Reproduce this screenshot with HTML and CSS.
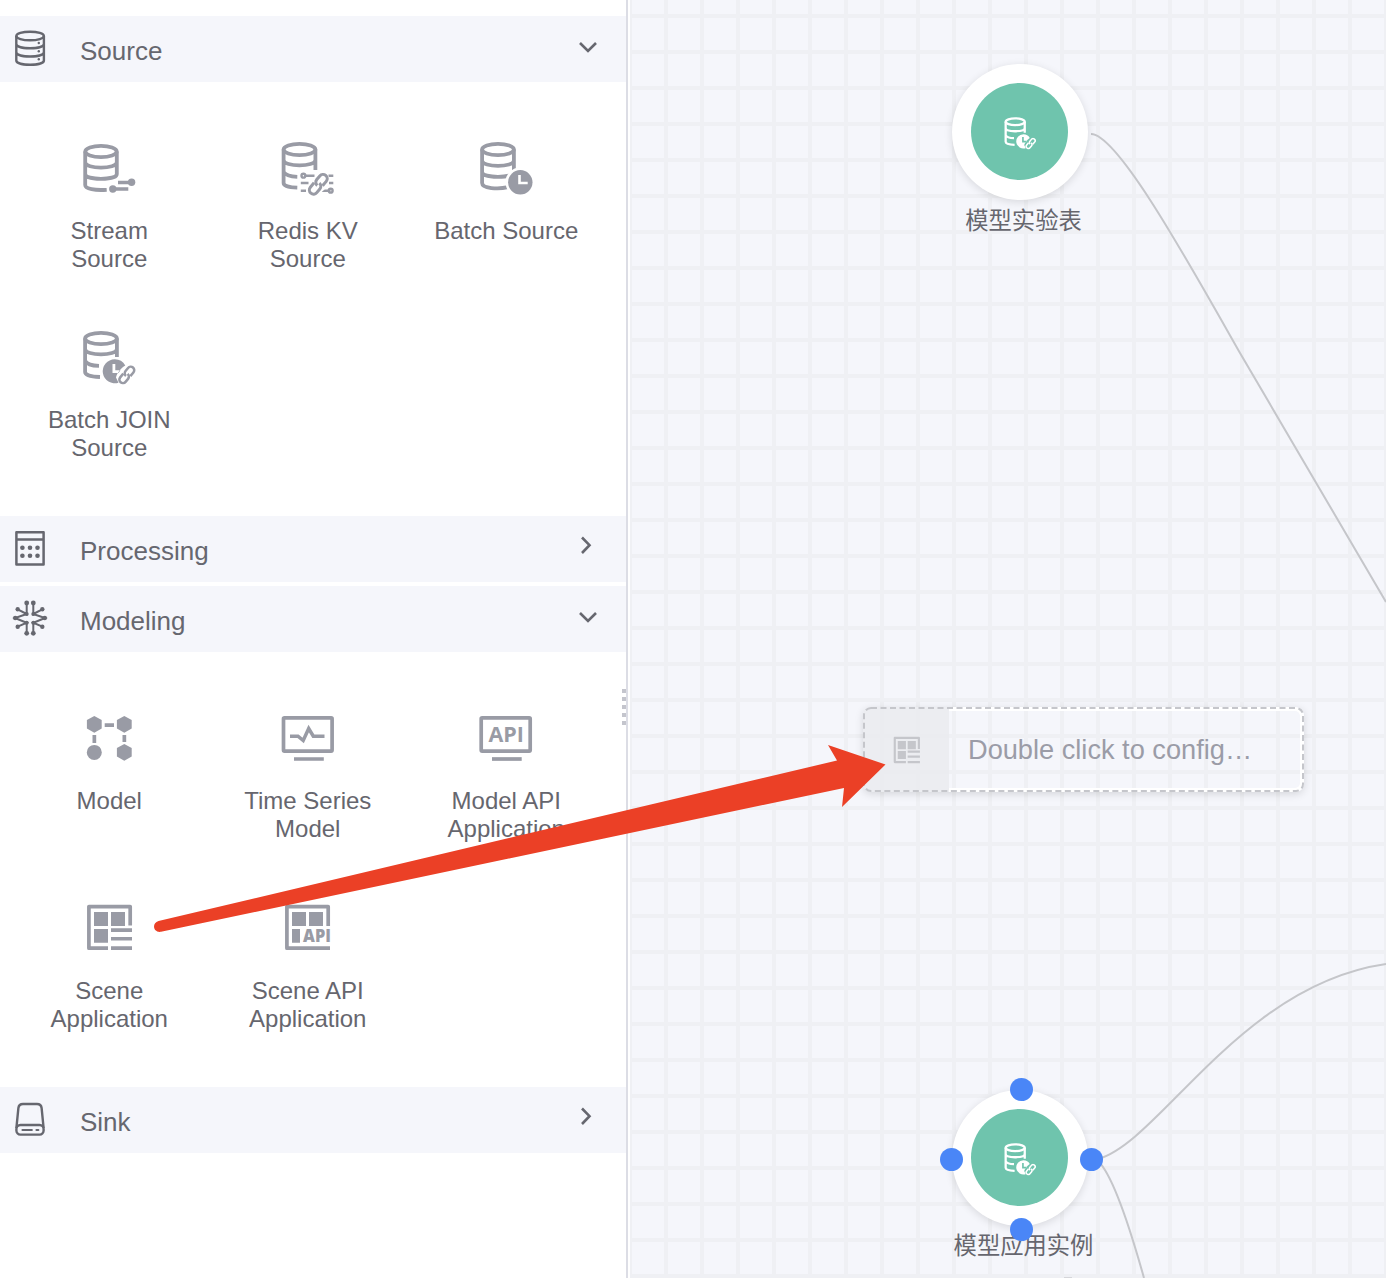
FILE: index.html
```html
<!DOCTYPE html>
<html lang="en">
<head>
<meta charset="utf-8">
<title>Flow editor</title>
<link rel="stylesheet" href="styles.css">
</head>
<body>
<svg class="defs" width="0" height="0" aria-hidden="true">
  <defs>
    <symbol id="link" viewBox="-12 -12 24 24">
      <g transform="rotate(-50) scale(1.05)" fill="none" stroke="currentColor" stroke-width="2.900">
        <path d="M-1.500-4H-7A4 4 0 0 0-7 4H-2.500A4 4 0 0 0 1.500 0"/>
        <path d="M1.500 4H7A4 4 0 0 0 7-4H2.500A4 4 0 0 0-1.500 0"/>
      </g>
    </symbol>
    <symbol id="join" viewBox="0 0 60 60">
      <g fill="none" stroke="currentColor" stroke-width="3.800">
        <ellipse cx="22" cy="9.500" rx="15.900" ry="5.600"/>
        <path d="M6.100 9.500V43C6.100 46 12 47.700 21 48M37.900 9.500V28M6.100 20C6.100 27.200 37.900 27.200 37.900 20M6.100 32C8 35.500 13 36.700 20 36.900"/>
      </g>
      <path fill="currentColor" fill-rule="evenodd" d="M35.700 30.300A12 12 0 0 1 46.300 36.500C42 39 38 44 37 48.500L39.500 53.700A12 12 0 1 1 35.700 30.300ZM33.500 35V44H39.500L41.500 41.300H36.300V35Z"/>
      <use href="#link" x="37.800" y="35.900" width="20" height="20"/>
    </symbol>
    <symbol id="scene" viewBox="0 0 60 60">
      <path fill="none" stroke="currentColor" stroke-width="3.700" stroke-linejoin="round" d="M51.200 25.500V6.600H9.900V48.200H29"/>
      <path fill="currentColor" d="M15 12H29V26H15ZM32 12H46V26H32ZM15 29H29V42.700H15ZM32 28.300H53V32H32ZM32 36.900H53V40.600H32ZM32 46.200H53V50H32Z"/>
    </symbol>
    <symbol id="down" viewBox="0 0 24 24"><path d="M4 8L12 16 20 8" fill="none" stroke="currentColor" stroke-width="2.600"/></symbol>
    <symbol id="right" viewBox="0 0 24 24"><path d="M6 2.500L13.500 10.200 6 18" fill="none" stroke="currentColor" stroke-width="2.600"/></symbol>
  </defs>
</svg>

<div class="editor">
  <aside class="panel">
    <section class="group">
      <header class="group-head">
        <svg class="head-icon" viewBox="0 0 36 40"><g fill="none" stroke="currentColor" stroke-width="2.400"><ellipse cx="18.100" cy="8" rx="13.800" ry="4.300"/><path d="M4.300 8V32.500C4.300 38.200 31.900 38.200 31.900 32.500V8M4.300 16C4.300 21.700 31.900 21.700 31.900 16M4.300 24.200C4.300 29.900 31.900 29.900 31.900 24.200"/></g><g fill="currentColor"><circle cx="26.800" cy="15" r="1.200"/><circle cx="26.800" cy="23.200" r="1.200"/><circle cx="26.800" cy="31.300" r="1.200"/></g></svg>
        <span class="head-title">Source</span>
        <svg class="chevron"><use href="#down"/></svg>
      </header>
      <div class="items">
        <div class="item">
          <svg class="item-icon" viewBox="0 0 60 60"><g fill="none" stroke="currentColor" stroke-width="3.800"><ellipse cx="22" cy="11.500" rx="15.700" ry="5.600"/><path d="M6.200 11.500V45C6.200 49 16 50.600 27.700 49.800M37.800 11.500V34C37.800 40.500 6.200 40.500 6.200 34M6.200 22.300C6.200 29.300 37.800 29.300 37.800 22.300"/><path stroke-width="3.500" d="M39 42.400H52M34 49H49.300"/></g><g fill="currentColor"><circle cx="52.600" cy="42.300" r="3.700"/><circle cx="33.800" cy="49" r="3.700"/></g></svg>
          <span class="item-label">Stream Source</span>
        </div>
        <div class="item">
          <svg class="item-icon" viewBox="0.500 0 60 60"><g fill="none" stroke="currentColor" stroke-width="3.800"><ellipse cx="22" cy="9.500" rx="15.900" ry="5.600"/><path d="M6.100 9.500V43C6.100 45.700 12 47.400 19.800 47.600M37.900 9.500V30M6.100 20C6.100 27.200 37.900 27.200 37.900 20M6.100 32C8 35.200 13 36.600 19.800 36.800"/><path stroke-width="2.600" d="M27 35.700H37M51 35.700H55.800M23.300 43H31M51.500 43H55.800M23.300 50.700H28.500M44 50.700H53"/><circle cx="25.900" cy="35.700" r="1.900" stroke-width="2.400"/><circle cx="53.200" cy="50.700" r="1.900" stroke-width="2.400"/></g><ellipse cx="40.800" cy="44.300" rx="13.200" ry="8" transform="rotate(-48 40.800 44.300)" fill="#fff"/><use href="#link" x="28.800" y="32.300" width="24" height="24"/></svg>
          <span class="item-label">Redis KV Source</span>
        </div>
        <div class="item">
          <svg class="item-icon" viewBox="0 0 60 60"><g fill="none" stroke="currentColor" stroke-width="3.800"><ellipse cx="22" cy="9.500" rx="15.900" ry="5.600"/><path d="M37.900 9.500V32C37.900 38.500 6.100 38.500 6.100 32M6.100 9.500V43C6.100 48.500 22 49.500 32 47.200M6.100 20.500C6.100 27.700 37.900 27.700 37.900 20.500"/></g><circle cx="44.300" cy="42.300" r="14.800" fill="#fff"/><circle cx="44.300" cy="42.300" r="12.200" fill="currentColor"/><path d="M43.500 35V43H51.700" fill="none" stroke="#fff" stroke-width="2.600"/></svg>
          <span class="item-label">Batch Source</span>
        </div>
        <div class="item">
          <svg class="item-icon"><use href="#join"/></svg>
          <span class="item-label">Batch JOIN Source</span>
        </div>
      </div>
    </section>

    <section class="group">
      <header class="group-head">
        <svg class="head-icon" viewBox="0 0 36 40"><path fill="none" stroke="currentColor" stroke-width="2.500" stroke-linejoin="round" d="M4.400 4.200H31.600V36.500H4.400ZM4.400 11.400H31.600"/><g fill="currentColor"><circle cx="10.400" cy="19.700" r="2.300"/><circle cx="18" cy="19.700" r="2.300"/><circle cx="25.500" cy="19.700" r="2.300"/><circle cx="10.400" cy="27.700" r="2.300"/><circle cx="18" cy="27.700" r="2.300"/><circle cx="25.500" cy="27.700" r="2.300"/></g></svg>
        <span class="head-title">Processing</span>
        <svg class="chevron"><use href="#right"/></svg>
      </header>
    </section>

    <section class="group">
      <header class="group-head">
        <svg class="head-icon" viewBox="0 0 36 40"><path fill="none" stroke="currentColor" stroke-width="2" d="M14.700 5V16L5.700 11.300M14.700 16L3 20 14.700 24.700 5.700 28.700M14.700 24.700V35.300M21.300 5V16L30.300 11.300M21.300 16L33 20 21.300 24.700 30.300 28.700M21.300 24.700V35.300"/><g fill="currentColor"><circle cx="14.700" cy="5" r="2.400"/><circle cx="21.300" cy="5" r="2.400"/><circle cx="5.700" cy="11.300" r="2.200"/><circle cx="30.300" cy="11.300" r="2.200"/><circle cx="3.200" cy="20" r="2.200"/><circle cx="32.800" cy="20" r="2.200"/><circle cx="5.700" cy="28.700" r="2.200"/><circle cx="30.300" cy="28.700" r="2.200"/><circle cx="14.700" cy="35.300" r="2.400"/><circle cx="21.300" cy="35.300" r="2.400"/><circle cx="14.700" cy="16" r="2"/><circle cx="21.300" cy="16" r="2"/><circle cx="14.700" cy="24.700" r="2"/><circle cx="21.300" cy="24.700" r="2"/></g></svg>
        <span class="head-title">Modeling</span>
        <svg class="chevron"><use href="#down"/></svg>
      </header>
      <div class="items items-modeling">
        <div class="item">
          <svg class="item-icon" viewBox="0 0 60 60" fill="currentColor"><path d="M15.300 5.900L22.700 10.100V18.500L15.300 22.700 7.900 18.500V10.100ZM45.300 5.900L52.700 10.100V18.500L45.300 22.700 37.900 18.500V10.100ZM45.300 33.900L52.700 38.100V46.500L45.300 50.700 37.900 46.500V38.100ZM25.700 13.300H35V17H25.700ZM13.500 25H17.200V33H13.500ZM43.500 25H47.200V32H43.500Z"/><circle cx="15.300" cy="42.400" r="7.500"/></svg>
          <span class="item-label">Model</span>
        </div>
        <div class="item">
          <svg class="item-icon" viewBox="0.500 0 60 60"><rect x="6" y="7.800" width="48.600" height="33.300" rx="1" fill="none" stroke="currentColor" stroke-width="3.700"/><path fill="none" stroke="currentColor" stroke-width="3.500" d="M12.500 26.200H20.500L25.700 30.500 31.200 18.500 35.800 26.200H47M16.500 49H46.300"/></svg>
          <span class="item-label">Time Series Model</span>
        </div>
        <div class="item">
          <svg class="item-icon" viewBox="0 0 60 60"><rect x="5.200" y="7.800" width="49" height="33.300" rx="1" fill="none" stroke="currentColor" stroke-width="3.700"/><path fill="none" stroke="currentColor" stroke-width="3.700" d="M16 49H45.700"/><text class="icon-text" x="12.400" y="32.400" font-size="21.500" textLength="35.500" lengthAdjust="spacingAndGlyphs">API</text></svg>
          <span class="item-label">Model API Application</span>
        </div>
        <div class="item">
          <svg class="item-icon"><use href="#scene"/></svg>
          <span class="item-label">Scene Application</span>
        </div>
        <div class="item">
          <svg class="item-icon" viewBox="0.500 0 60 60"><path fill="none" stroke="currentColor" stroke-width="3.700" stroke-linejoin="round" d="M50.700 26V6.600H9.400V48.200H52.500"/><path fill="currentColor" d="M14.500 12H28.500V26H14.500ZM31.500 12H45.500V26H31.500ZM14.500 29H22.500V42.700H14.500Z"/><text class="icon-text icon-text-heavy" x="25.600" y="42.300" font-size="17" textLength="27.800" lengthAdjust="spacingAndGlyphs">API</text></svg>
          <span class="item-label">Scene API Application</span>
        </div>
      </div>
    </section>

    <section class="group">
      <header class="group-head">
        <svg class="head-icon" viewBox="0 0 36 40"><g fill="none" stroke="currentColor" stroke-width="2.400"><path d="M4.400 29L6.400 9Q6.900 5 11 5H25Q29.100 5 29.600 9L31.600 29"/><rect x="4.400" y="26" width="27.200" height="9.600" rx="4"/><path stroke-linecap="round" stroke-width="2.200" d="M10.500 31H19.800M24.500 31H26.300"/></g></svg>
        <span class="head-title">Sink</span>
        <svg class="chevron"><use href="#right"/></svg>
      </header>
    </section>
    <div class="grip"><i></i><i></i><i></i><i></i><i></i></div>
  </aside>

  <main class="canvas">
    <svg class="edges" viewBox="630 0 756 1278"><g fill="none" stroke="#c5c6ca" stroke-width="2"><path d="M1091 134C1118 134 1190 265 1240 353L1386 602"/><path d="M1098 1159C1160 1142 1240 985 1386 964"/><path d="M1098 1161C1113 1175 1130 1228 1144 1278"/></g><path d="M1064 1277H1072V1278H1064Z" fill="#d5d6da"/></svg>

    <div class="node node-first">
      <div class="disc"><div class="disc-core"><svg class="disc-icon"><use href="#join"/></svg></div></div>
      <span class="node-label">模型实验表</span>
    </div>
    <div class="node node-second">
      <div class="disc"><div class="disc-core"><svg class="disc-icon"><use href="#join"/></svg></div></div>
      <span class="node-label">模型应用实例</span>
      <i class="port port-top"></i><i class="port port-right"></i><i class="port port-bottom"></i><i class="port port-left"></i>
    </div>

    <div class="draft">
      <div class="draft-side"><svg class="draft-icon"><use href="#scene"/></svg></div>
      <div class="draft-text">Double click to config…</div>
      <svg class="draft-frame" viewBox="0 0 441 85"><rect x="1" y="1" width="439" height="83" rx="7" fill="none" stroke="#c5c6cb" stroke-width="2" stroke-dasharray="6 3.500"/></svg>
    </div>
  </main>
</div>

<svg class="arrow" viewBox="0 0 1386 1278"><path fill="#eb4026" d="M158.500 921L837 760.500 828 745 885.500 764.500 842 807 844 788 161 931.800C153 933 151.500 923 158.500 921Z"/></svg>
</body>
</html>
```

FILE: styles.css
```css
* { box-sizing: border-box; }

body {
  margin: 0;
  width: 1386px;
  height: 1278px;
  overflow: hidden;
  position: relative;
  background: #fff;
  font-family: "Liberation Sans", "Noto Sans CJK SC", sans-serif;
  color: #66666e;
}

svg { display: block; }

.defs { position: absolute; }

.editor { display: flex; height: 1278px; }

.panel {
  position: relative;
  width: 628px;
  flex: none;
  padding-top: 16px;
  border-right: 2px solid #dcdde5;
  background: #fff;
}

.group { margin-bottom: 4px; }

.group-head {
  display: flex;
  height: 66px;
  padding: 0 26px 0 12px;
  background: #f5f6fb;
  color: #66676f;
}

.head-icon { width: 36px; height: 40px; margin-top: 12px; }

.head-title {
  flex: 1;
  margin-left: 32px;
  font-size: 26px;
  line-height: 70px;
}

.chevron { width: 24px; height: 24px; margin-top: 19px; }

.items {
  display: grid;
  grid-template-columns: repeat(3, 198.5px);
  grid-auto-rows: 133px;
  row-gap: 56px;
  padding: 58px 0 50px 10px;
}

.items-modeling { row-gap: 57px; }

.item {
  display: flex;
  flex-direction: column;
  align-items: center;
  gap: 17px;
}

.item-icon { width: 60px; height: 60px; color: #999ba5; }

.icon-text {
  fill: currentColor;
  font-family: "Open Sans", "Noto Sans", sans-serif;
  font-weight: 700;
}

.icon-text-heavy { font-weight: 800; }

.item-label {
  width: 150px;
  font-size: 24px;
  line-height: 28px;
  text-align: center;
}

.grip {
  position: absolute;
  right: 0;
  top: 689px;
  display: flex;
  flex-direction: column;
  gap: 4px;
}

.grip i { width: 4px; height: 4px; background: #c4c5cd; }

.canvas {
  position: relative;
  flex: 1;
  margin-left: 2px;
  overflow: hidden;
  background-color: #f5f6fb;
  background-image:
    linear-gradient(to right, #eff0f4 4px, transparent 4px),
    linear-gradient(to bottom, #eff0f4 4px, transparent 4px);
  background-size: 36px 36px;
  background-position: -2px 0, 0 14px;
}

.edges { position: absolute; inset: 0; width: 756px; height: 1278px; }

.node { position: absolute; left: 322px; width: 136px; height: 136px; }
.node-first { top: 64px; }
.node-second { top: 1089.500px; }

.disc {
  width: 136px;
  height: 136px;
  padding: 19.300px 0 0 19px;
  border-radius: 50%;
  background: #fff;
  box-shadow: 0 2px 8px rgba(0, 0, 0, 0.12);
}

.disc-core {
  width: 97px;
  height: 97px;
  padding: 33px 0 0 30.500px;
  border-radius: 50%;
  background: #6fc4ad;
}

.disc-icon { width: 36px; height: 36px; color: #fff; }

.node-label {
  position: absolute;
  top: 137.500px;
  left: 50%;
  transform: translateX(calc(-50% + 3.500px));
  font-family: "Noto Sans CJK SC", sans-serif;
  font-size: 23.300px;
  font-weight: 400;
  line-height: 34px;
  white-space: nowrap;
}

.port {
  position: absolute;
  width: 23.400px;
  height: 23.400px;
  border-radius: 50%;
  background: #4a86f7;
}

.port-top { left: 57.600px; top: -11.700px; }
.port-right { left: 127.600px; top: 58.300px; }
.port-bottom { left: 57.600px; top: 128.300px; }
.port-left { left: -12.400px; top: 58.300px; }

.draft {
  position: absolute;
  left: 233px;
  top: 707px;
  display: flex;
  width: 441px;
  height: 85px;
  border-radius: 8px;
  box-shadow: 0 2px 8px rgba(0, 0, 0, 0.13);
  background-color: #f5f6fb;
  background-image:
    linear-gradient(to right, #eff0f4 4px, transparent 4px),
    linear-gradient(to bottom, #eff0f4 4px, transparent 4px);
  background-size: 36px 36px;
  background-position: 17px 0, 0 27px;
}

.draft-side {
  width: 86px;
  padding: 27px 0 0 26px;
  border-radius: 8px 0 0 8px;
  background: rgba(234, 235, 239, 0.850);
}

.draft-icon { width: 35px; height: 35px; color: #c5c6cb; }

.draft-text {
  flex: 1;
  padding-left: 19px;
  border: 4px solid #fff;
  border-left: 0;
  border-radius: 0 9px 9px 0;
  font-size: 27.200px;
  line-height: 78px;
  color: #9b9ca7;
  white-space: nowrap;
}

.draft-frame { position: absolute; inset: 0; width: 441px; height: 85px; }

.arrow { position: absolute; inset: 0; width: 1386px; height: 1278px; pointer-events: none; }
```
